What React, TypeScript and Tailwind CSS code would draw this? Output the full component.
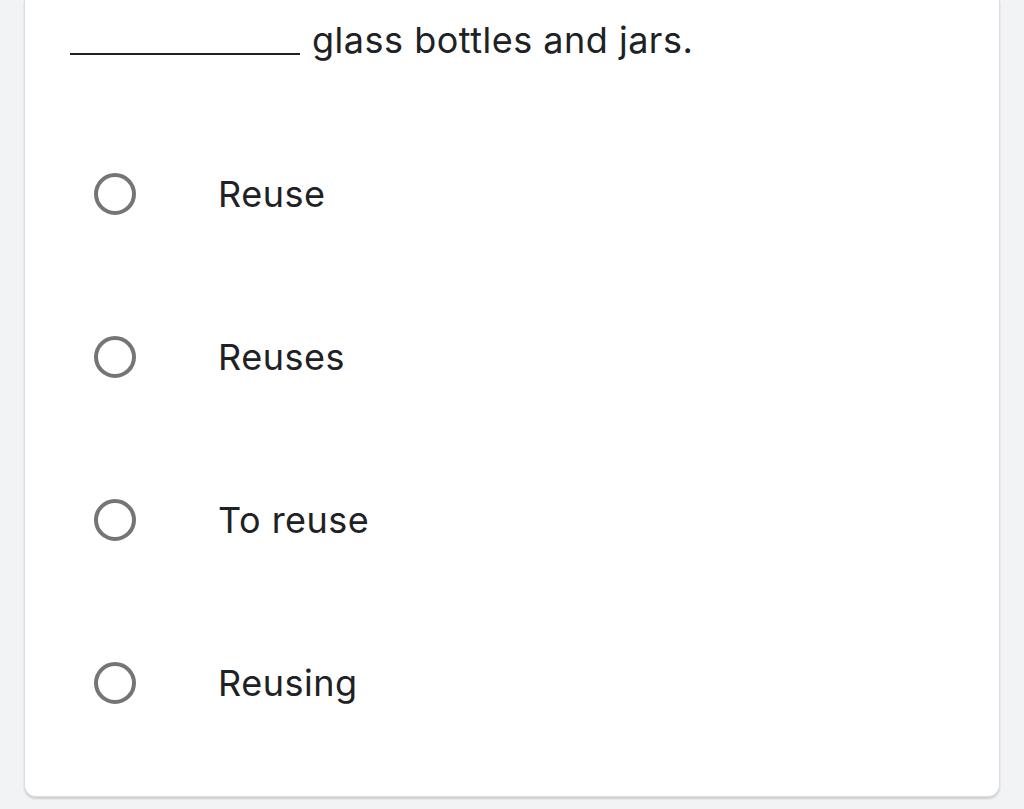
const options = ["Reuse", "Reuses", "To reuse", "Reusing"];

export default function App() {
  return (
    <div
      className="min-h-screen bg-[#f1f3f4] px-6"
      style={{ fontFamily: "Inter, 'Noto Sans', sans-serif" }}
    >
      <div className="h-[797px] rounded-b-xl border-x border-b border-[#dadce0] bg-white shadow-[0_2px_2px_rgba(0,0,0,0.15)]">
        <div className="flex h-[112px] items-start pl-[45px] pt-[19px]">
          <p className="flex items-end text-[36px] leading-[42px] tracking-[0.5px] text-[#202124]">
            <span className="mb-[6px] inline-block w-[230px] border-b-2 border-[#202124]" />
            <span className="ml-3">glass bottles and jars.</span>
          </p>
        </div>

        <ul className="flex flex-col">
          {options.map((opt) => (
            <li key={opt} className="flex h-[163px] items-center pl-[69px]">
              <span className="h-[42px] w-[42px] shrink-0 rounded-full border-4 border-[#757575]" />
              <span className="ml-[82px] text-[36px] tracking-[0.5px] text-[#202124]">
                {opt}
              </span>
            </li>
          ))}
        </ul>
      </div>
    </div>
  );
}
